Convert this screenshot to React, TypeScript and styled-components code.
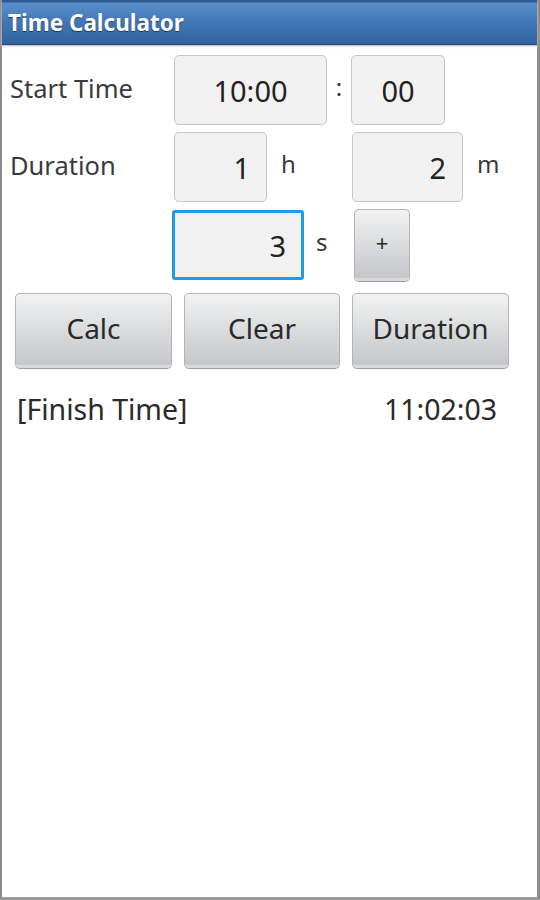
import React from 'react'
import styled, { createGlobalStyle } from 'styled-components'

const GlobalStyle = createGlobalStyle`
  html, body {
    margin: 0;
    padding: 0;
    background: #ffffff;
  }
  body {
    font-family: 'Noto Sans', 'Open Sans', sans-serif;
  }
`

const Screen = styled.div`
  box-sizing: border-box;
  width: 540px;
  height: 900px;
  display: flex;
  flex-direction: column;
  background: #ffffff;
  border-left: 2px solid #8c8c8c;
  border-right: 3px solid #8c8c8c;
  border-bottom: 3px solid #9a9a9a;
`

const TitleBar = styled.div`
  height: 44px;
  display: flex;
  align-items: center;
  padding-left: 6px;
  background: linear-gradient(#2c5a92 0, #2c5a92 2px, #5c90cc 3px, #4479b8 45%, #2f639f 100%);
  border-bottom: 1px solid #1f4676;
  box-shadow: 0 1px 0 #c9c9c9, 0 2px 2px #e4e4e4;
  color: #ffffff;
  font-family: 'Noto Sans', 'Open Sans', sans-serif;
  font-weight: 700;
  font-size: 22.5px;
  text-shadow: 0 1px 1px rgba(0, 0, 0, 0.5);
`

const Content = styled.div`
  display: flex;
  flex-direction: column;
  padding: 10px 0 0 8px;
`

const Row = styled.div<{ $top?: number }>`
  display: flex;
  align-items: center;
  margin-top: ${(p) => p.$top ?? 0}px;
`

const Label = styled.div<{ $width: number }>`
  width: ${(p) => p.$width}px;
  flex: none;
  color: #3a3a3a;
  font-size: 25.5px;
  padding-bottom: 4px;
`

const Field = styled.input<{ $width: number; $align?: 'center' | 'right'; $focused?: boolean }>`
  box-sizing: border-box;
  width: ${(p) => p.$width}px;
  height: 70px;
  flex: none;
  margin: 0;
  padding: 0 ${(p) => (p.$align === 'center' ? 0 : p.$focused ? 15 : 16)}px 0 0;
  border: ${(p) => (p.$focused ? '3px solid #1e9ae6' : '1px solid #c6c6c6')};
  border-radius: ${(p) => (p.$focused ? 3 : 5)}px;
  background: #f1f1f1;
  color: #222222;
  font-family: 'Noto Sans', 'Open Sans', sans-serif;
  font-size: 29px;
  text-align: ${(p) => p.$align ?? 'right'};
  outline: none;
`

const Unit = styled.div<{ $width: number; $pad?: number; $center?: boolean }>`
  width: ${(p) => p.$width}px;
  flex: none;
  box-sizing: border-box;
  padding-left: ${(p) => p.$pad ?? 0}px;
  padding-bottom: 8px;
  text-align: ${(p) => (p.$center ? 'center' : 'left')};
  color: #3a3a3a;
  font-size: 24px;
`

const Spacer = styled.div<{ $width: number }>`
  width: ${(p) => p.$width}px;
  flex: none;
`

const GrayButton = styled.button<{ $width: number; $height: number; $size: number }>`
  box-sizing: border-box;
  width: ${(p) => p.$width}px;
  height: ${(p) => p.$height}px;
  flex: none;
  margin: 0;
  padding: 0 0 4px;
  border: 1px solid #b3b3b3;
  border-bottom: 3px solid #d9d9d9;
  border-radius: 5px;
  background: linear-gradient(#f2f2f2 0%, #e2e3e4 35%, #cfd1d4 75%, #c5c7ca 100%);
  box-shadow: 0 1px 0 #9c9c9c;
  color: #2a2a2a;
  font-family: 'Noto Sans', 'Open Sans', sans-serif;
  font-size: ${(p) => p.$size}px;
`

const ButtonRow = styled.div`
  display: flex;
  gap: 12px;
  margin-top: 12px;
  padding-left: 5px;
`

const ResultRow = styled.div`
  display: flex;
  justify-content: space-between;
  margin-top: 22px;
  padding: 0 40px 0 7px;
  color: #2a2a2a;
  font-size: 28.5px;
`

export default function App() {
  return (
    <>
      <GlobalStyle />
      <Screen>
        <TitleBar>Time Calculator</TitleBar>
        <Content>
          <Row>
            <Label $width={164}>Start Time</Label>
            <Field $width={153} $align="center" readOnly defaultValue="10:00" />
            <Unit $width={24} $center>:</Unit>
            <Field $width={94} $align="center" readOnly defaultValue="00" />
          </Row>
          <Row $top={7}>
            <Label $width={164}>Duration</Label>
            <Field $width={93} readOnly defaultValue="1" />
            <Unit $width={85} $pad={14}>h</Unit>
            <Field $width={111} readOnly defaultValue="2" />
            <Unit $width={40} $pad={14}>m</Unit>
          </Row>
          <Row $top={7}>
            <Spacer $width={162} />
            <Field $width={132} $focused readOnly defaultValue="3" />
            <Unit $width={50} $pad={12}>s</Unit>
            <GrayButton $width={56} $height={72} $size={22}>+</GrayButton>
          </Row>
          <ButtonRow>
            <GrayButton $width={157} $height={75} $size={28}>Calc</GrayButton>
            <GrayButton $width={156} $height={75} $size={28}>Clear</GrayButton>
            <GrayButton $width={157} $height={75} $size={28}>Duration</GrayButton>
          </ButtonRow>
          <ResultRow>
            <span>[Finish Time]</span>
            <span>11:02:03</span>
          </ResultRow>
        </Content>
      </Screen>
    </>
  )
}
